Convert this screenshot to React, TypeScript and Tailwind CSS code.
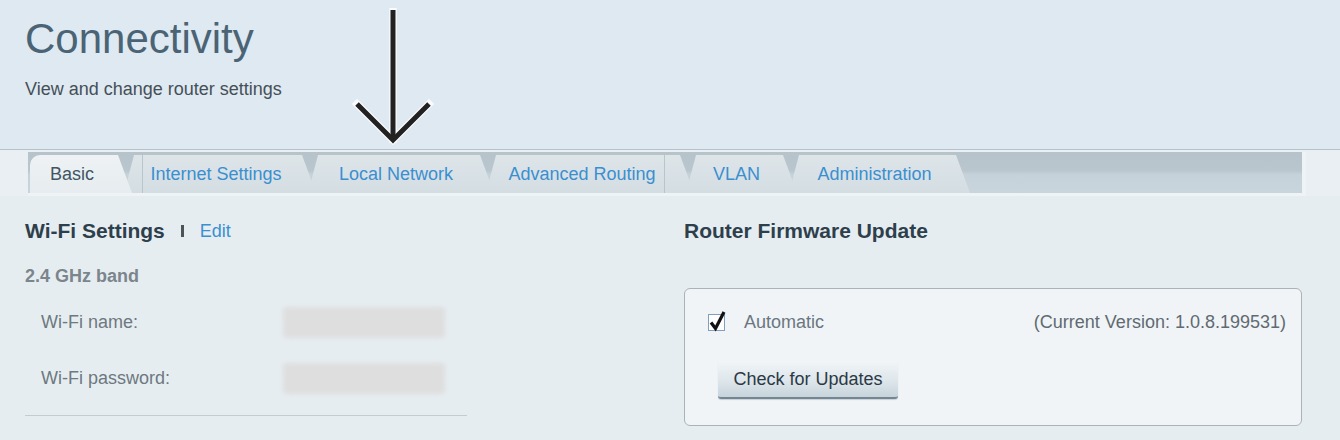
import React from 'react'

const tabs = [
    { label: 'Internet Settings', width: 'w-[192px]', sep: 'left' },
    { label: 'Local Network', width: 'w-[186px]', sep: '' },
    { label: 'Advanced Routing', width: 'w-[208px]', sep: 'right' },
    { label: 'VLAN', width: 'w-[111px]', sep: '' },
    { label: 'Administration', width: 'w-[181px]', sep: '' },
]

function Tabs() {
    return (
        <div className="ml-[28px] w-[1278px] border-r-[4px] border-b-[3px] border-[#eef3f5]">
            <div className="h-[41px] bg-[linear-gradient(#b6c3ca_0%,#b9c6cd_45%,#c6d2d9_55%,#c9d5dc_100%)] pl-[2px] pt-[3px] flex">
                {/* Active tab */}
                <div className="relative z-10 w-[102px] h-[38px] flex items-center pl-[20px] rounded-tl-[10px] bg-[linear-gradient(#eef2f4,#e6ecef)] [clip-path:polygon(0_0,calc(100%-14px)_0,100%_100%,0_100%)] text-[18px] text-[#3f5565]">
                    Basic
                </div>
                {tabs.map((tab) => (
                    <div
                        key={tab.label}
                        className={`relative -ml-[8px] ${tab.width} h-[38px] flex items-center justify-center pr-[10px] bg-[linear-gradient(#dde5e9,#d4dde2)] [clip-path:polygon(10px_0,calc(100%-14px)_0,100%_100%,0_100%)] text-[18px] text-[#3a8fd0]`}
                    >
                        {tab.sep === 'left' && <div className="absolute left-[18px] top-0 h-full w-px bg-[#b9c5cc]" />}
                        {tab.sep === 'right' && <div className="absolute right-[29px] top-0 h-full w-px bg-[#b9c5cc]" />}
                        <span className={tab.sep === 'left' ? 'pl-[2px]' : tab.sep === 'right' ? 'pr-[6px]' : ''}>{tab.label}</span>
                    </div>
                ))}
            </div>
        </div>
    )
}

function Field({ label, className }: { label: string; className: string }) {
    return (
        <div className={`flex items-center h-[31px] pl-[16px] ${className}`}>
            <span className="w-[242px] text-[18px] text-[#6d7880]">{label}</span>
            <div className="w-[162px] h-[31px] rounded-[4px] bg-[#dedede] blur-[2px]" />
        </div>
    )
}

function Arrow() {
    return (
        <svg className="absolute left-[350px] top-[8px]" width="90" height="140" viewBox="0 0 90 140" fill="none">
            <g stroke="#ffffff" strokeWidth="7.5" strokeOpacity="0.8" strokeLinecap="square">
                <path d="M43 2 V131" />
                <path d="M7 96 L43 132 L79 96" />
            </g>
            <g stroke="#222222" strokeWidth="5" strokeLinecap="butt">
                <path d="M43 2 V130" />
                <path d="M7 96 L43 132 L79 96" />
            </g>
        </svg>
    )
}

export default function App() {
    return (
        <div className="relative w-[1340px] h-[440px] overflow-hidden bg-[#e6edf1] font-['Liberation_Sans',Arial,sans-serif]">
            {/* Header */}
            <div className="h-[149px] bg-[#dfe9f1] pl-[25px] pt-[15px]">
                <h1 className="text-[42px] leading-[48px] text-[#4a6475]">Connectivity</h1>
                <p className="mt-[14px] text-[18px] leading-[24px] text-[#454f57]">View and change router settings</p>
            </div>
            <div className="border-t border-[#b5c2ca] pt-[2px] bg-[#e9eff2]">
                <Tabs />
            </div>

            {/* Content */}
            <div className="flex pl-[25px] pt-[23px]">
                <div className="w-[443px]">
                    <div className="flex items-center h-[24px]">
                        <h2 className="text-[21px] leading-[24px] font-bold text-[#2e3f4c]">Wi-Fi Settings</h2>
                        <div className="ml-[16px] w-[3px] h-[12px] bg-[#4d5358]" />
                        <a className="ml-[16px] text-[18px] text-[#3a8fd0]">Edit</a>
                    </div>
                    <div className="mt-[22px] text-[18px] leading-[22px] font-bold text-[#7b858c]">2.4 GHz band</div>
                    <Field label="Wi-Fi name:" className="mt-[20px]" />
                    <Field label="Wi-Fi password:" className="mt-[25px]" />
                    <div className="mt-[21px] h-px w-[442px] bg-[#c3ccd1]" />
                </div>

                <div className="ml-[216px] w-[618px]">
                    <h2 className="text-[21px] leading-[24px] font-bold text-[#2e3f4c]">Router Firmware Update</h2>
                    <div className="mt-[45px] h-[138px] rounded-[6px] border border-[#a8b3ba] bg-[#f0f4f7] pl-[23px] pr-[15px] pt-[24px]">
                        <div className="flex items-center h-[18px]">
                            <div className="relative w-[17px] h-[17px] border border-[#7f9fbf] bg-white">
                                <svg className="absolute -left-[1px] -top-[6px]" width="20" height="23" viewBox="0 0 20 23" fill="none">
                                    <path d="M3 13.5 L7.5 19.5 L16 3" stroke="#111" strokeWidth="3.2" />
                                </svg>
                            </div>
                            <span className="ml-[19px] text-[18px] text-[#6b7680]">Automatic</span>
                            <span className="ml-auto text-[18px] text-[#5f6a72]">(Current Version: 1.0.8.199531)</span>
                        </div>
                        <button className="mt-[30px] ml-[10px] w-[180px] h-[38px] rounded-[3px] border-b-2 border-[#728793] bg-[linear-gradient(#f1f5f7,#dde6eb_55%,#c7d4db)] shadow-[0_1px_1px_rgba(0,0,0,0.15)] text-[18px] text-[#2b3945]">
                            Check for Updates
                        </button>
                    </div>
                </div>
            </div>

            <Arrow />
        </div>
    )
}
